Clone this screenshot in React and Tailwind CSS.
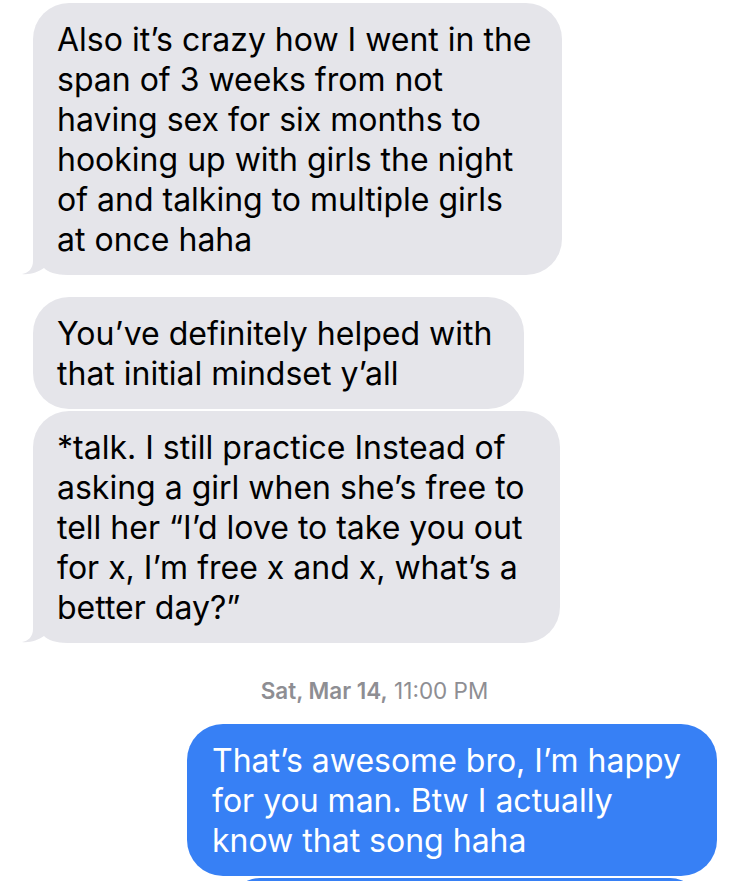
const font = { fontFamily: 'Inter, "Noto Sans", sans-serif' };

function Tail() {
    return (
        <svg
            className="absolute left-[-12px] bottom-0 overflow-visible"
            width="50"
            height="40"
            viewBox="-12 -40 50 40"
        >
            <path
                d="M0 -36 L0 -14 C0 -6 -5 -2 -11 -1 C-3 0 5 -3 11 -7 C15 -3 22 0 36 0 L36 -36 Z"
                fill="#e5e5ea"
            />
        </svg>
    );
}

function Incoming({ lines, width, tail }) {
    return (
        <div
            className="relative ml-[33px] bg-[#e5e5ea] rounded-[36px] pl-6 pt-[17px] pb-[15px] text-black text-[32px] leading-[40px]"
            style={{ width }}
        >
            {tail && <Tail />}
            <div className="relative">
                {lines.map((l, i) => (
                    <div key={i} className="whitespace-nowrap">{l}</div>
                ))}
            </div>
        </div>
    );
}

export default function App() {
    return (
        <div className="w-[749px] h-[881px] overflow-hidden bg-white pt-[3px]" style={font}>
            <Incoming
                width={529}
                tail
                lines={[
                    'Also it’s crazy how I went in the',
                    'span of 3 weeks from not',
                    'having sex for six months to',
                    'hooking up with girls the night',
                    'of and talking to multiple girls',
                    'at once haha'
                ]}
            />
            <div className="mt-[22px]">
                <Incoming
                    width={491}
                    lines={['You’ve definitely helped with', 'that initial mindset y’all']}
                />
            </div>
            <div className="mt-[2px]">
                <Incoming
                    width={527}
                    tail
                    lines={[
                        '*talk. I still practice Instead of',
                        'asking a girl when she’s free to',
                        'tell her “I’d love to take you out',
                        'for x, I’m free x and x, what’s a',
                        'better day?”'
                    ]}
                />
            </div>

            <div className="mt-[33px] text-center text-[22.5px] leading-[30px] text-[#8e8e93]">
                <span className="font-semibold">Sat, Mar 14,</span> 11:00 PM
            </div>

            <div className="mt-[18px] flex flex-col items-end pr-[32px]">
                <div className="w-[530px] bg-[#3780f5] rounded-[36px] pl-[25px] pt-[17px] pb-[15px] text-white text-[32px] leading-[40px]">
                    <div className="whitespace-nowrap">That’s awesome bro, I’m happy</div>
                    <div className="whitespace-nowrap">for you man. Btw I actually</div>
                    <div className="whitespace-nowrap">know that song haha</div>
                </div>
                <div className="mt-[2px] mr-[17px] w-[470px] h-[60px] bg-[#3780f5] rounded-[36px]" />
            </div>
        </div>
    );
}
